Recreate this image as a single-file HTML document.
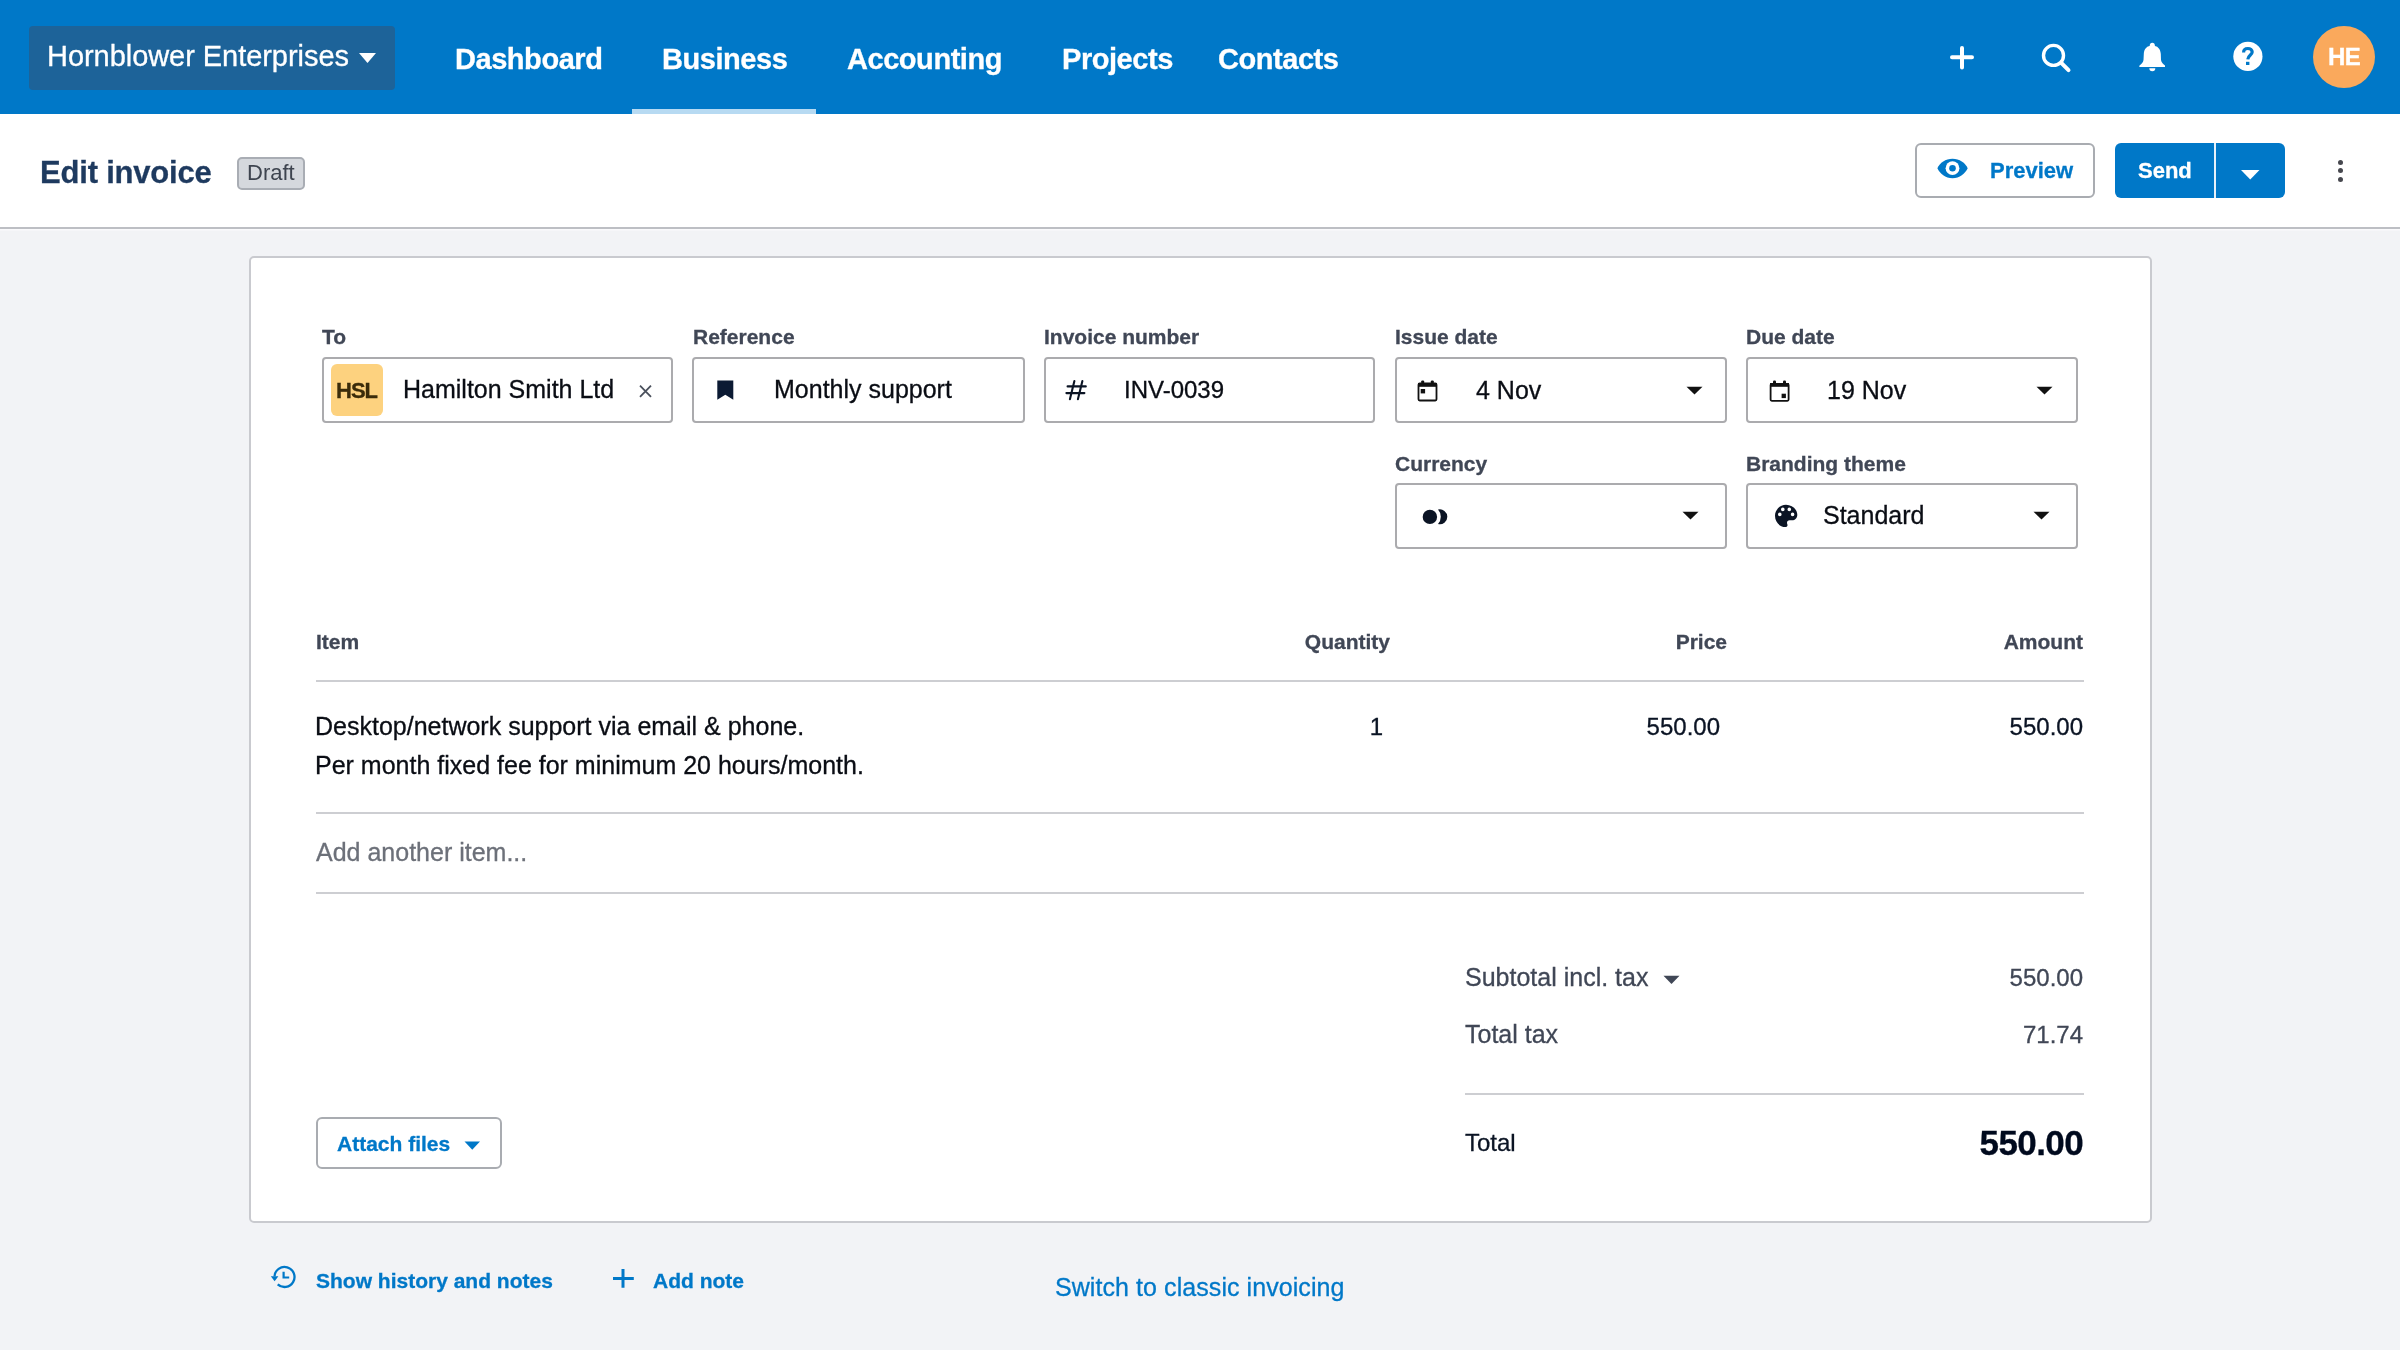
<!DOCTYPE html>
<html><head><meta charset="utf-8">
<style>
*{box-sizing:border-box;margin:0;padding:0}
html,body{width:2400px;height:1350px;overflow:hidden;background:#F2F3F6;-webkit-font-smoothing:antialiased;font-family:"Liberation Sans",sans-serif;color:#000A1E}
.a{position:absolute;white-space:nowrap}
.hdr{position:absolute;left:0;top:0;width:2400px;height:114px;background:#0078C8}
.org{position:absolute;left:29px;top:26px;width:366px;height:64px;border-radius:4px;background:#1D6399}
.nav{color:#fff;font-weight:bold;font-size:29px;line-height:29px;letter-spacing:-0.45px}
.sub{position:absolute;left:0;top:114px;width:2400px;height:115px;background:#fff;border-bottom:2px solid #BDBFC4;box-shadow:0 1.5px 0 #FAFAFC}
.card{position:absolute;left:249px;top:256px;width:1903px;height:967px;background:#fff;border:2px solid #C9CACF;border-radius:5px}
.lbl{font-weight:bold;font-size:21px;line-height:21px;color:#404756}
.inp{position:absolute;height:66px;border:2px solid #ABABAE;border-radius:4px;background:#fff}
.val{font-size:25px;line-height:25px;color:#0A0D14}
.hr{position:absolute;height:2px;background:#CDCED2}
.th{font-weight:bold;font-size:21px;line-height:21px;color:#404756}
.blue{color:#0078C8}
#root{position:absolute;left:0;top:0;width:2400px;height:1350px;will-change:transform;-webkit-text-stroke:0.3px currentColor}
</style></head><body><div id="root">
<div class="hdr"></div>
<div class="org"></div>
<div class="a" style="left:47px;top:42px;font-size:29px;line-height:29px;color:#fff;letter-spacing:-0.05px">Hornblower Enterprises</div>
<svg class="a" style="left:359px;top:53px" width="17" height="10" viewBox="0 0 17 10"><path d="M0 0H17L8.5 10Z" fill="#fff"/></svg>
<div class="a nav" style="left:455px;top:45px">Dashboard</div>
<div class="a nav" style="left:662px;top:45px">Business</div>
<div class="a nav" style="left:847px;top:45px">Accounting</div>
<div class="a nav" style="left:1062px;top:45px">Projects</div>
<div class="a nav" style="left:1218px;top:45px">Contacts</div>
<div class="a" style="left:632px;top:109px;width:184px;height:5px;background:#B7DAF2"></div>

<div class="sub"></div>
<div class="a" style="left:40px;top:157px;font-size:31px;line-height:31px;font-weight:bold;color:#1E3A5F;letter-spacing:-0.2px">Edit invoice</div>
<div class="a" style="left:237px;top:157px;width:68px;height:33px;background:#D5D8DD;border:2px solid #A9ADB4;border-radius:5px"></div>
<div class="a" style="left:247px;top:162px;font-size:22px;line-height:22px;color:#3E444F;-webkit-text-stroke:0">Draft</div>

<div class="card"></div>

<!-- header icons -->
<svg class="a" style="left:1946px;top:42px" width="32" height="32" viewBox="1946 42 32 32"><path d="M1962 48V67.5M1952 57.3H1972" stroke="#fff" stroke-width="4" stroke-linecap="round" fill="none"/></svg>
<svg class="a" style="left:2036px;top:38px" width="40" height="38" viewBox="2036 38 40 38"><circle cx="2053.5" cy="55.4" r="10" stroke="#fff" stroke-width="3.4" fill="none"/><path d="M2061.5 63.2L2068.5 70.2" stroke="#fff" stroke-width="4" stroke-linecap="round"/></svg>
<svg class="a" style="left:2136px;top:40px" width="32" height="34" viewBox="0 0 32 34"><rect x="13.8" y="2.7" width="5" height="6" rx="2.5" fill="#fff"/><path d="M16.3 5.5C11 5.5 8 9 7.8 14L7.5 20C7.3 22.5 5 24.5 3.5 25.5L3.3 27H29L29 25.5C27.5 24.5 25.3 22.5 25 20L24.8 14C24.5 9 21.5 5.5 16.3 5.5Z" fill="#fff"/><path d="M13.3 28.3A3 3 0 0 0 19.3 28.3Z" fill="#fff"/></svg>
<svg class="a" style="left:2232px;top:41px" width="32" height="32" viewBox="0 0 32 32"><circle cx="15.9" cy="15.4" r="14.6" fill="#fff"/><path d="M11.6 11.4C11.6 8.9 13.4 7.5 15.9 7.5C18.4 7.5 20.2 9 20.2 11.1C20.2 13.8 16 14.4 15.8 18.4" stroke="#0078C8" stroke-width="3.2" fill="none"/><rect x="14" y="20.8" width="3.4" height="3.2" fill="#0078C8"/></svg>
<div class="a" style="left:2313px;top:26px;width:62px;height:62px;border-radius:50%;background:#FAA95C"></div>
<div class="a" style="left:2328px;top:45px;font-size:24px;line-height:24px;font-weight:bold;color:#fff;letter-spacing:-0.6px">HE</div>

<!-- subheader buttons -->
<div class="a" style="left:1915px;top:143px;width:180px;height:55px;border:2px solid #A9ACB1;border-radius:6px;background:#fff"></div>
<svg class="a" style="left:1937px;top:158px" width="31" height="21" viewBox="0 0 31 21"><path d="M0.4 10.3C2.8 4.8 8.5 0.8 15.5 0.8C22.5 0.8 28.2 4.8 30.7 10.3C28.2 15.8 22.5 20.2 15.5 20.2C8.5 20.2 2.8 15.8 0.4 10.3Z" fill="#0078C8"/><circle cx="15.5" cy="10.2" r="6.9" fill="#fff"/><circle cx="15.5" cy="10.2" r="3.3" fill="#0078C8"/></svg>
<div class="a blue" style="left:1990px;top:160px;font-size:22px;line-height:22px;font-weight:bold">Preview</div>
<div class="a" style="left:2115px;top:143px;width:170px;height:55px;border-radius:6px;background:#0078C8"></div>
<div class="a" style="left:2214px;top:143px;width:2px;height:55px;background:#E6F1FA"></div>
<div class="a" style="left:2138px;top:160px;font-size:22px;line-height:22px;font-weight:bold;color:#fff">Send</div>
<svg class="a" style="left:2241px;top:170px" width="19" height="10" viewBox="0 0 19 10"><path d="M0 0H18.5L9.25 9.5Z" fill="#fff"/></svg>
<div class="a" style="left:2337.5px;top:160px;width:5px;height:5px;border-radius:50%;background:#46474E"></div>
<div class="a" style="left:2337.5px;top:168.2px;width:5px;height:5px;border-radius:50%;background:#46474E"></div>
<div class="a" style="left:2337.5px;top:176.7px;width:5px;height:5px;border-radius:50%;background:#46474E"></div>

<!-- card fields -->
<div class="a lbl" style="left:322px;top:326px">To</div>
<div class="a lbl" style="left:693px;top:326px">Reference</div>
<div class="a lbl" style="left:1044px;top:326px">Invoice number</div>
<div class="a lbl" style="left:1395px;top:326px">Issue date</div>
<div class="a lbl" style="left:1746px;top:326px">Due date</div>
<div class="a lbl" style="left:1395px;top:453px">Currency</div>
<div class="a lbl" style="left:1746px;top:453px">Branding theme</div>

<div class="inp" style="left:322px;top:357px;width:351px"></div>
<div class="a" style="left:331px;top:364px;width:52px;height:52px;border-radius:6px;background:#FDD27F"></div>
<div class="a" style="left:336px;top:380px;font-size:22px;line-height:22px;font-weight:bold;color:#3B2C0A;letter-spacing:-1px">HSL</div>
<div class="a val" style="left:403px;top:377px">Hamilton Smith Ltd</div>
<svg class="a" style="left:638px;top:384px" width="15" height="15" viewBox="0 0 15 15"><path d="M2 1.6L13 12.9M13 1.6L2 12.9" stroke="#4A505C" stroke-width="1.8"/></svg>

<div class="inp" style="left:692px;top:357px;width:333px"></div>
<svg class="a" style="left:717px;top:380px" width="17" height="20" viewBox="0 0 17 20"><path d="M0.3 0.4H16.3V19.7L8.3 14.8L0.3 19.7Z" fill="#0B1A33"/></svg>
<div class="a val" style="left:774px;top:377px">Monthly support</div>

<div class="inp" style="left:1044px;top:357px;width:331px"></div>
<svg class="a" style="left:1062px;top:377px" width="28" height="26" viewBox="1062 377 28 26"><path d="M1074.4 381L1069.9 399.2M1082.4 381L1077.9 399.2M1067.6 386.4H1085.8M1066.4 393.1H1084.4" stroke="#0B1424" stroke-width="2.1" stroke-linecap="round" fill="none"/></svg>
<div class="a val" style="left:1124px;top:377px;font-size:24px">INV-0039</div>

<div class="inp" style="left:1395px;top:357px;width:332px"></div>
<svg class="a" style="left:1417px;top:380px" width="22" height="22" viewBox="0 0 22 22"><rect x="4.2" y="0.4" width="3" height="4" rx="1.2" fill="#111"/><rect x="13.8" y="0.4" width="3" height="4" rx="1.2" fill="#111"/><rect x="1.5" y="3.5" width="18" height="17" rx="1.2" fill="none" stroke="#111" stroke-width="1.8"/><rect x="1" y="3" width="19" height="3.8" fill="#111"/><rect x="3.7" y="9" width="4.4" height="4.4" fill="#111"/></svg>
<div class="a val" style="left:1476px;top:378px">4 Nov</div>
<svg class="a" style="left:1686px;top:386px" width="17" height="10" viewBox="0 0 17 10"><path d="M0.5 0.8H16.5L8.5 8.6Z" fill="#111"/></svg>

<div class="inp" style="left:1746px;top:357px;width:332px"></div>
<svg class="a" style="left:1769px;top:380px" width="22" height="22" viewBox="0 0 22 22"><rect x="4" y="0.4" width="3" height="4" rx="1.2" fill="#111"/><rect x="14" y="0.4" width="3" height="4" rx="1.2" fill="#111"/><rect x="1.6" y="3.8" width="18" height="17" rx="1.2" fill="none" stroke="#111" stroke-width="1.8"/><rect x="1" y="3" width="19" height="3.8" fill="#111"/><rect x="12.6" y="13.7" width="4.3" height="4.4" fill="#111"/></svg>
<div class="a val" style="left:1827px;top:378px">19 Nov</div>
<svg class="a" style="left:2036px;top:386px" width="17" height="10" viewBox="0 0 17 10"><path d="M0.5 0.8H16.5L8.5 8.6Z" fill="#111"/></svg>

<div class="inp" style="left:1395px;top:483px;width:332px"></div>
<svg class="a" style="left:1420px;top:507px" width="30" height="20" viewBox="1420 507 30 20"><circle cx="1429.9" cy="516.9" r="7.2" fill="#0B1424"/><path d="M1438 509.6A7.48 7.48 0 1 1 1438 524.1A10.8 10.8 0 0 0 1438 509.6Z" fill="#0B1424"/></svg>
<svg class="a" style="left:1682px;top:511px" width="17" height="10" viewBox="0 0 17 10"><path d="M0.5 0.8H16.5L8.5 8.6Z" fill="#111"/></svg>

<div class="inp" style="left:1746px;top:483px;width:332px"></div>
<svg class="a" style="left:1774px;top:504px" width="24" height="24" viewBox="0 0 24 24"><path fill-rule="evenodd" fill="#0B1424" d="M12 0.8C18 0.8 23.3 5.3 23.3 10.8C23.3 14.3 21 16.3 18 16.3L15.5 16.3C14 16.3 13 17.3 13 18.8C13 19.8 13.5 20.3 13.5 21.3C13.5 22.3 12.5 23.1 11.5 23.1C5.5 23.1 1 17.8 1 11.8C1 5.8 6 0.8 12 0.8Z M8.8 3.6A1.8 1.8 0 1 0 8.8 7.2A1.8 1.8 0 1 0 8.8 3.6Z M15.3 3.6A1.8 1.8 0 1 0 15.3 7.2A1.8 1.8 0 1 0 15.3 3.6Z M5.8 8.6A1.8 1.8 0 1 0 5.8 12.2A1.8 1.8 0 1 0 5.8 8.6Z M18.6 8.6A1.8 1.8 0 1 0 18.6 12.2A1.8 1.8 0 1 0 18.6 8.6Z"/></svg>
<div class="a val" style="left:1823px;top:503px">Standard</div>
<svg class="a" style="left:2033px;top:511px" width="17" height="10" viewBox="0 0 17 10"><path d="M0.5 0.8H16.5L8.5 8.6Z" fill="#111"/></svg>

<!-- table -->
<div class="a th" style="left:316px;top:631px">Item</div>
<div class="a th" style="left:1190px;top:631px;width:200px;text-align:right">Quantity</div>
<div class="a th" style="left:1527px;top:631px;width:200px;text-align:right">Price</div>
<div class="a th" style="left:1883px;top:631px;width:200px;text-align:right">Amount</div>
<div class="hr" style="left:316px;top:680px;width:1768px"></div>
<div class="a val" style="left:315px;top:714px">Desktop/network support via email &amp; phone.</div>
<div class="a val" style="left:315px;top:753px">Per month fixed fee for minimum 20 hours/month.</div>
<div class="a" style="left:1183px;top:715px;width:200px;text-align:right;font-size:24px;line-height:24px;color:#0B1424">1</div>
<div class="a" style="left:1520px;top:715px;width:200px;text-align:right;font-size:24px;line-height:24px;color:#0B1424">550.00</div>
<div class="a" style="left:1883px;top:715px;width:200px;text-align:right;font-size:24px;line-height:24px;color:#0B1424">550.00</div>
<div class="hr" style="left:316px;top:812px;width:1768px"></div>
<div class="a" style="left:316px;top:840px;font-size:25px;line-height:25px;color:#6C7079">Add another item...</div>
<div class="hr" style="left:316px;top:892px;width:1768px"></div>

<!-- totals -->
<div class="a" style="left:1465px;top:965px;font-size:25px;line-height:25px;color:#404756">Subtotal incl. tax</div>
<svg class="a" style="left:1663px;top:975px" width="17" height="10" viewBox="0 0 17 10"><path d="M0.5 0.8H16.5L8.5 9Z" fill="#404756"/></svg>
<div class="a" style="left:1883px;top:966px;width:200px;text-align:right;font-size:24px;line-height:24px;color:#404756">550.00</div>
<div class="a" style="left:1465px;top:1022px;font-size:25px;line-height:25px;color:#404756">Total tax</div>
<div class="a" style="left:1883px;top:1023px;width:200px;text-align:right;font-size:24px;line-height:24px;color:#404756">71.74</div>
<div class="hr" style="left:1465px;top:1093px;width:619px"></div>
<div class="a" style="left:1465px;top:1131px;font-size:24px;line-height:24px;color:#0B1424">Total</div>
<div class="a" style="left:1783px;top:1125px;width:300px;text-align:right;font-size:35px;line-height:35px;font-weight:bold;color:#000A1E;letter-spacing:-0.6px">550.00</div>

<!-- attach -->
<div class="a" style="left:316px;top:1117px;width:186px;height:52px;border:2px solid #A9ACB1;border-radius:6px;background:#fff"></div>
<div class="a blue" style="left:337px;top:1133px;font-size:21px;line-height:21px;font-weight:bold">Attach files</div>
<svg class="a" style="left:464px;top:1141px" width="17" height="10" viewBox="0 0 17 10"><path d="M0.5 0.5H16L8.25 8.8Z" fill="#0078C8"/></svg>

<!-- footer -->
<svg class="a" style="left:270px;top:1264px" width="28" height="26" viewBox="0 0 28 26"><path d="M7.7 20.3A10 10 0 1 0 4.5 12.5" stroke="#0078C8" stroke-width="2.3" fill="none"/><path d="M0.8 12.2H8.4L4.6 17.3Z" fill="#0078C8"/><path d="M13.6 7.8V13.5H19.2" stroke="#0078C8" stroke-width="2.2" fill="none"/></svg>
<div class="a blue" style="left:316px;top:1270px;font-size:21px;line-height:21px;font-weight:bold">Show history and notes</div>
<svg class="a" style="left:610px;top:1266px" width="26" height="24" viewBox="0 0 26 24"><path d="M13 3V21.8M3 12.4H23.8" stroke="#0078C8" stroke-width="3" fill="none"/></svg>
<div class="a blue" style="left:653px;top:1270px;font-size:21px;line-height:21px;font-weight:bold">Add note</div>
<div class="a blue" style="left:1055px;top:1275px;font-size:25px;line-height:25px;letter-spacing:0.07px">Switch to classic invoicing</div>
</div></body></html>
